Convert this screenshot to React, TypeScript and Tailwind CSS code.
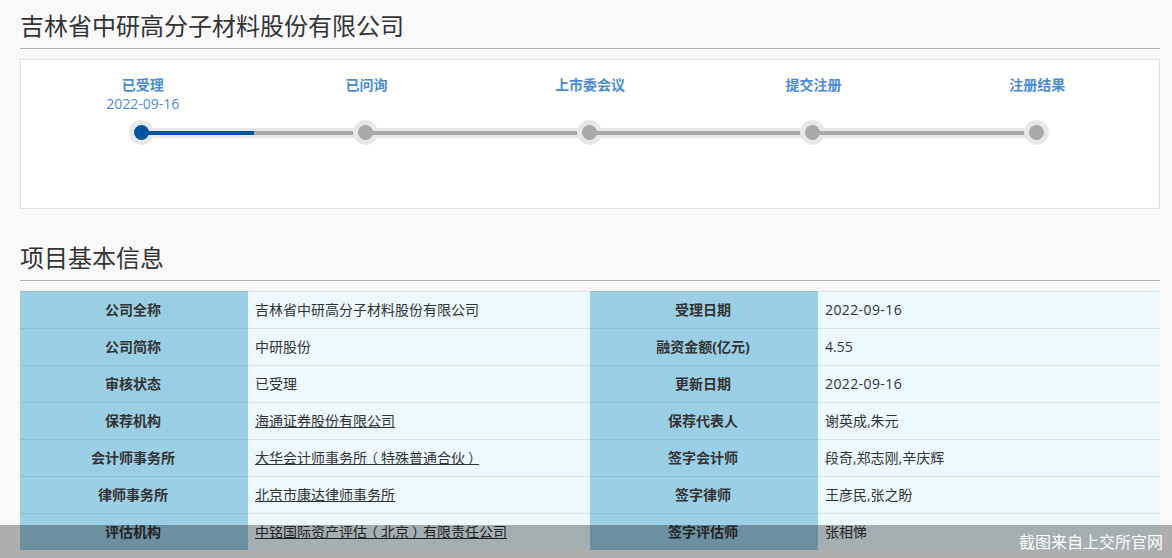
import type { ReactNode } from 'react'

const steps = ['已受理', '已问询', '上市委会议', '提交注册', '注册结果']

// brackets are centred in their cell in the original: trim them with palt, then space out evenly
const P = ({ c }: { c: string }) => <span className="tracking-[3.5px] [font-feature-settings:'palt']">{c}</span>

const rows: { label: string; value: ReactNode; link?: boolean; label2: string; value2: string; num?: boolean }[] = [
  { label: '公司全称', value: '吉林省中研高分子材料股份有限公司', label2: '受理日期', value2: '2022-09-16', num: true },
  { label: '公司简称', value: '中研股份', label2: '融资金额(亿元)', value2: '4.55' },
  { label: '审核状态', value: '已受理', label2: '更新日期', value2: '2022-09-16', num: true },
  { label: '保荐机构', value: '海通证券股份有限公司', link: true, label2: '保荐代表人', value2: '谢英成,朱元' },
  { label: '会计师事务所', value: <>大华会计师事务<P c="所（" />特殊普通合<P c="伙）" /></>, link: true, label2: '签字会计师', value2: '段奇,郑志刚,辛庆辉' },
  { label: '律师事务所', value: '北京市康达律师事务所', link: true, label2: '签字律师', value2: '王彦民,张之盼' },
  { label: '评估机构', value: <>中铭国际资产评<P c="估（" />北<P c="京）" />有限责任公司</>, link: true, label2: '签字评估师', value2: '张相悌' },
]

function Dot({ active }: { active?: boolean }) {
  return (
    <span className="flex h-[25px] w-[25px] shrink-0 items-center justify-center rounded-full bg-[#e8e8e8]">
      <span className={`relative z-10 h-[15px] w-[15px] rounded-full ${active ? 'bg-[#00559f]' : 'bg-[#a9a9a9]'}`} />
    </span>
  )
}

function Bar({ done }: { done?: boolean }) {
  return (
    <span className="-mx-[12.5px] flex h-[10px] flex-1 items-center bg-[#e8e8e8]">
      <span className="flex h-[4px] w-full bg-[#a9a9a9]">{done && <span className="h-full w-[112px] bg-[#00559f]" />}</span>
    </span>
  )
}

export default function App() {
  return (
    <div className="relative h-[558px] overflow-hidden bg-[#f9f9f9] pl-[20px] pr-[12px] font-['Open_Sans','Noto_Sans_CJK_SC',sans-serif] text-[#333]">
      <h2 className="h-[49px] border-b border-[#b3b3b3] pt-[9px] text-[24px] leading-[34px]">吉林省中研高分子材料股份有限公司</h2>

      <div className="mt-[10px] h-[150px] border border-[#e0e0e0] bg-white pt-[15px]">
        <div className="ml-[10px] mr-[10px] grid grid-cols-5 text-center text-[14px] leading-[19px] text-[#4a8bd4]">
          {steps.map((s, i) => (
            <div key={s} className="h-[37px]">
              <div className="font-semibold">{s}</div>
              {i === 0 && <div>2022-09-16</div>}
            </div>
          ))}
        </div>
        <div className="ml-[108px] mr-[110px] mt-[8px] flex items-center">
          {steps.map((s, i) => (
            <span key={s} className="contents">
              <Dot active={i === 0} />
              {i < steps.length - 1 && <Bar done={i === 0} />}
            </span>
          ))}
        </div>
      </div>

      <h2 className="mt-[32px] h-[40px] border-b border-[#b3b3b3] text-[24px] leading-[34px]">项目基本信息</h2>

      <table className="mt-[10px] w-full table-fixed border-separate border-spacing-0 text-[14px]">
        <colgroup>
          <col className="w-[228px]" />
          <col className="w-[342px]" />
          <col className="w-[228px]" />
          <col className="w-[342px]" />
        </colgroup>
        <tbody>
          {rows.map((r) => (
            <tr key={r.label} className="h-[37px]">
              <td className="border-t border-[#8fc0d6] bg-[#9bcfe5] pb-[1px] pr-[2px] text-center font-bold">{r.label}</td>
              <td className="border-t border-[#dde3e6] bg-[#edf9fe] pb-[1px] pl-[7px]">
                {r.link ? <a className="underline">{r.value}</a> : r.value}
              </td>
              <td className="border-t border-[#8fc0d6] bg-[#9bcfe5] pb-[1px] pr-[2px] text-center font-bold">{r.label2}</td>
              <td className={`border-t border-[#dde3e6] bg-[#edf9fe] pb-[1px] pl-[7px] ${r.num ? 'tracking-[0.4px]' : ''}`}>{r.value2}</td>
            </tr>
          ))}
        </tbody>
      </table>

      <div className="absolute inset-x-0 bottom-0 flex h-[33px] items-center justify-end bg-black/30 pr-[9px] text-[16px] text-white">
        截图来自上交所官网
      </div>
    </div>
  )
}
